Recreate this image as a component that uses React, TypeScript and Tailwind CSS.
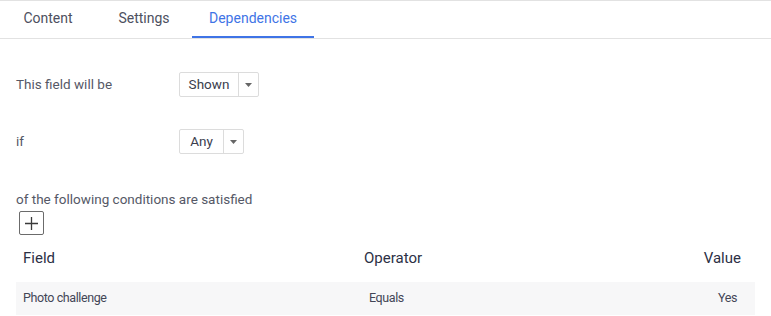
import React, { useState } from 'react';

const tabs = ['Content', 'Settings', 'Dependencies'];

const Dropdown = ({ value, width }: { value: string; width: string }) => (
  <div className="flex h-[25px] border border-[#dcdcdc] rounded-[2px] bg-white">
    <div className={`${width} flex items-center justify-center text-[13.5px] text-[#3a3d4d]`}>{value}</div>
    <div className="w-[20px] flex items-center justify-center border-l border-[#dcdcdc]">
      <svg width="7" height="4" viewBox="0 0 7 4">
        <path d="M0 0 L7 0 L3.5 4 Z" fill="#666" />
      </svg>
    </div>
  </div>
);

const App = () => {
  const [active, setActive] = useState('Dependencies');

  return (
    <div className="w-[771px] h-[316px] overflow-hidden bg-white font-['Roboto',sans-serif] text-[#555866]">
      {/* Tabs */}
      <div className="flex h-[39px] border-t border-b border-[#e2e2e2]">
        {tabs.map((t) => (
          <button
            key={t}
            onClick={() => setActive(t)}
            className={`min-w-[96px] px-[17px] text-center text-[14px] border-b-2 ${
              active === t ? 'text-[#3f74e6] border-[#3f74e6]' : 'text-[#4d5060] border-transparent'
            }`}
          >
            {t}
          </button>
        ))}
      </div>

      <div className="px-4">
        {/* Visibility */}
        <div className="mt-[33px] flex items-center">
          <div className="w-[163px] text-[13.5px]">This field will be</div>
          <Dropdown value="Shown" width="w-[58px]" />
        </div>

        <div className="mt-[32px] flex items-center">
          <div className="w-[163px] text-[13.5px]">if</div>
          <Dropdown value="Any" width="w-[43px]" />
        </div>

        <div className="mt-[37px] text-[13.5px] leading-[16px]">of the following conditions are satisfied</div>
        <button className="mt-[4px] ml-[3px] w-[25px] h-[24px] flex items-center justify-center border border-[#6b6b6b] rounded-[2px]">
          <svg width="13" height="13" viewBox="0 0 13 13">
            <path d="M6.5 0 V13 M0 6.5 H13" stroke="#3a3a3a" strokeWidth="1.3" />
          </svg>
        </button>

        {/* Conditions */}
        <div className="text-[#2c3045]">
          <div className="flex items-center h-[47px] text-[15px]">
            <div className="w-[348px] pl-[7px]">Field</div>
            <div className="flex-1">Operator</div>
            <div className="pr-[14px]">Value</div>
          </div>
          <div className="flex items-center h-[33px] bg-[#f7f7f8] text-[12.5px] tracking-[-0.4px] text-[#434656]">
            <div className="w-[348px] pl-[7px]">Photo challenge</div>
            <div className="flex-1 pl-[5px]">Equals</div>
            <div className="pr-[18px]">Yes</div>
          </div>
        </div>
      </div>
    </div>
  );
};

export default App;
